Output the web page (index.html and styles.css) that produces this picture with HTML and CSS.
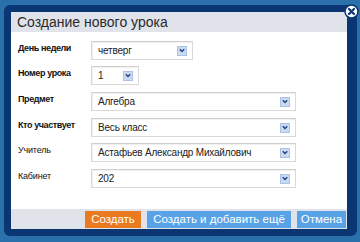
FILE: index.html
```html
<!DOCTYPE html>
<html lang="ru">
<head>
<meta charset="utf-8">
<link rel="stylesheet" href="styles.css">
</head>
<body>
<div class="frame">
  <div class="panel">
    <div class="title">Создание нового урока</div>
    <div class="form">
      <div class="lbl b r1">День недели</div>
      <div class="sel w1 r1"><span>четверг</span><i class="arr"><svg width="9" height="9" viewBox="0 0 9 9"><path d="M2 3 L4.5 5.5 L7 3" fill="none" stroke="#1d3f86" stroke-width="1.6"/></svg></i></div>
      <div class="lbl b">Номер урока</div>
      <div class="sel w2"><span>1</span><i class="arr"><svg width="9" height="9" viewBox="0 0 9 9"><path d="M2 3 L4.5 5.5 L7 3" fill="none" stroke="#1d3f86" stroke-width="1.6"/></svg></i></div>
      <div class="lbl b">Предмет</div>
      <div class="sel w3"><span>Алгебра</span><i class="arr"><svg width="9" height="9" viewBox="0 0 9 9"><path d="M2 3 L4.5 5.5 L7 3" fill="none" stroke="#1d3f86" stroke-width="1.6"/></svg></i></div>
      <div class="lbl b">Кто участвует</div>
      <div class="sel w3"><span>Весь класс</span><i class="arr"><svg width="9" height="9" viewBox="0 0 9 9"><path d="M2 3 L4.5 5.5 L7 3" fill="none" stroke="#1d3f86" stroke-width="1.6"/></svg></i></div>
      <div class="lbl">Учитель</div>
      <div class="sel w3"><span>Астафьев Александр Михайлович</span><i class="arr"><svg width="9" height="9" viewBox="0 0 9 9"><path d="M2 3 L4.5 5.5 L7 3" fill="none" stroke="#1d3f86" stroke-width="1.6"/></svg></i></div>
      <div class="lbl">Кабинет</div>
      <div class="sel w3"><span>202</span><i class="arr"><svg width="9" height="9" viewBox="0 0 9 9"><path d="M2 3 L4.5 5.5 L7 3" fill="none" stroke="#1d3f86" stroke-width="1.6"/></svg></i></div>
    </div>
    <div class="footer">
      <div class="btn orange">Создать</div>
      <div class="btn blue wide">Создать и добавить ещё</div>
      <div class="btn blue cancel">Отмена</div>
    </div>
  </div>
  <div class="close"><svg width="15" height="15" viewBox="0 0 15 15"><circle cx="7.5" cy="7.5" r="6.5" fill="#ffffff" stroke="#0b3573" stroke-width="1.5"/><path d="M5 5 L10 10 M10 5 L5 10" stroke="#0b3573" stroke-width="2.2" stroke-linecap="round"/></svg></div>
</div>
</body>
</html>
```
FILE: styles.css
```css
html, body {
  margin: 0;
  padding: 0;
}
body {
  background: #2a70ab;
  width: 360px;
  height: 242px;
  overflow: hidden;
  font-family: "Liberation Sans", Arial, sans-serif;
}
.frame {
  position: relative;
  margin: 5px 3px 0 4px;
  width: 353px;
  height: 231px;
  box-sizing: border-box;
  padding: 7px 10px 7px 7px;
  background: #0b3674;
  border-radius: 6px;
}
.panel {
  background: #ffffff;
  height: 100%;
  display: flex;
  flex-direction: column;
}
.title {
  height: 20px;
  background: #e0e3ea;
  color: #2a2a2a;
  font-size: 14px;
  line-height: 21px;
  padding-left: 6px;
}
.form {
  flex: 1;
  display: grid;
  grid-template-columns: 73px auto;
  grid-template-rows: 25px 26px 26px 25px 26px 26px;
  padding: 9px 0 0 7px;
  align-items: start;
  justify-items: start;
}
.lbl {
  font-size: 9px;
  letter-spacing: -0.2px;
  color: #111;
  padding-top: 2px;
}
.lbl.b {
  font-weight: bold;
  letter-spacing: -0.4px;
}
.sel {
  height: 19px;
  box-sizing: border-box;
  border: 1px solid #d9d9d9;
  border-top-color: #cfcfcf;
  background: #fff;
  box-shadow: inset 1px 1px 1px #f0f0f0;
  display: flex;
  align-items: center;
  justify-content: space-between;
  padding: 0 5px 0 6px;
  font-size: 10px;
  letter-spacing: -0.2px;
  color: #222;
}
.w1 { width: 102px; }
.w2 { width: 48px; }
.w3 { width: 205px; }
.arr {
  width: 10px;
  height: 10px;
  box-sizing: border-box;
  background: #c9daf1;
  border: 1px solid #aac2e5;
  display: flex;
  align-items: center;
  justify-content: center;
}
.arr svg { display: block; }
.footer {
  height: 20px;
  background: #e0e3ea;
  display: flex;
  justify-content: flex-end;
  align-items: center;
  gap: 6px;
  padding-right: 1px;
}
.btn {
  height: 17px;
  line-height: 17px;
  font-size: 11.5px;
  color: #fff;
  text-align: center;
  white-space: nowrap;
}
.orange {
  background: #ea7a1f;
  width: 56px;
}
.blue {
  background: #58a2e6;
}
.wide { width: 144px; }
.cancel { width: 49px; }
.close {
  position: absolute;
  top: -1px;
  right: -2px;
}
.close svg { display: block; }
```
